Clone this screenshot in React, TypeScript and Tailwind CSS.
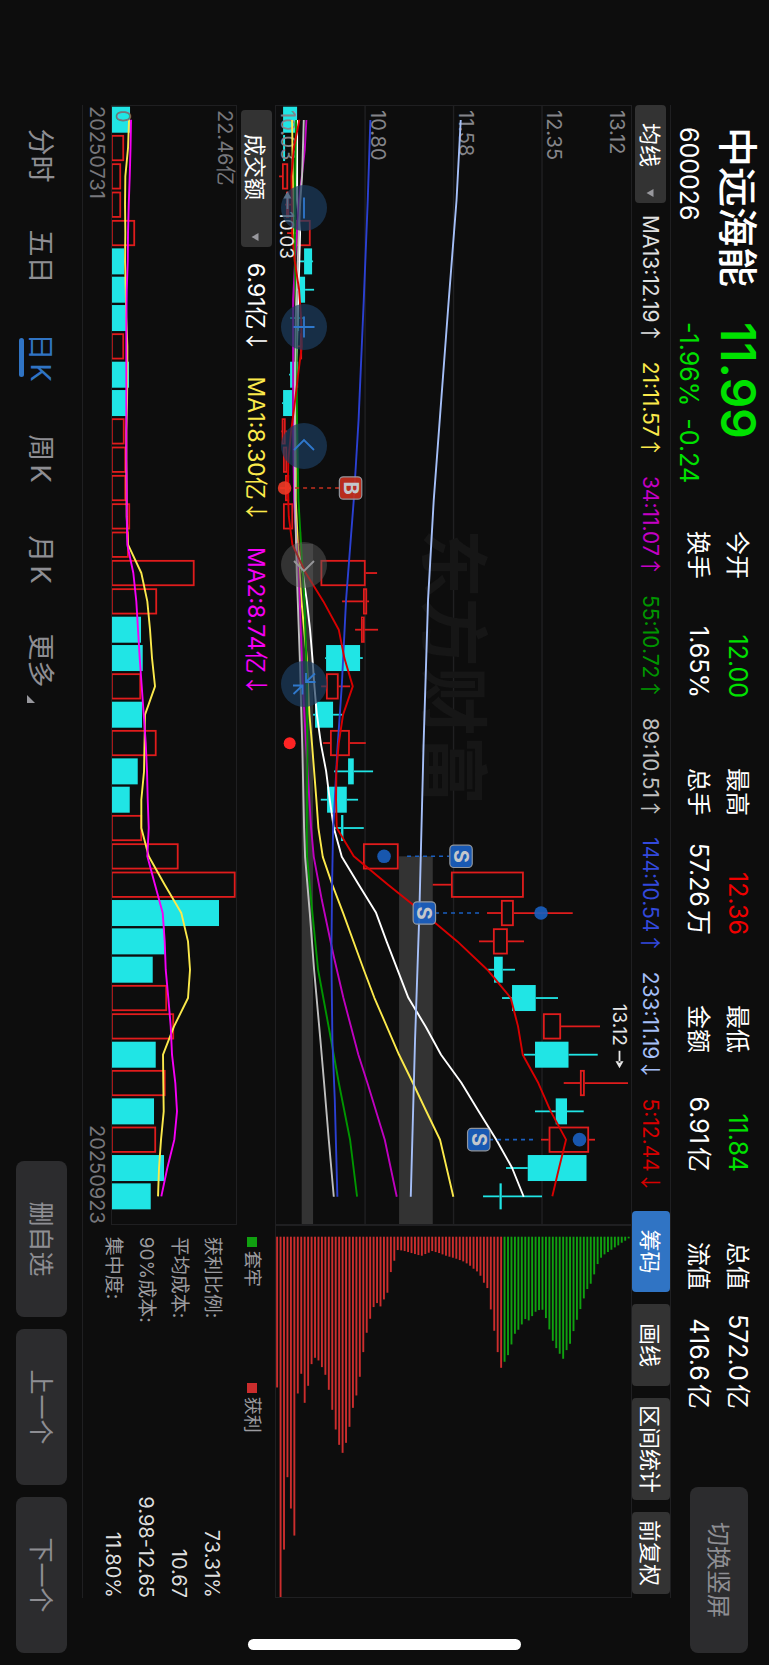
import React from "react";

type Candle = {
  up: boolean;
  body: [number, number];
  wick?: [number, number];
};

const STEP = 28.34;
const FIRST = 14.7;
const BODY = 26;
const centre = (i: number) => FIRST + i * STEP;

const PRICE_TOP = 632;
const AMOUNT_TOP = 238;

const UP = "#e01c1c";
const DOWN = "#20e5e5";

const up = (a: number, b: number, lo?: number, hi?: number): Candle => ({
  up: true,
  body: [a, b],
  wick: lo === undefined ? undefined : [lo, hi ?? b],
});
const down = (a: number, b: number, lo?: number, hi?: number): Candle => ({
  up: false,
  body: [a, b],
  wick: lo === undefined ? undefined : [lo, hi ?? b],
});

const candles: Candle[] = [
  down(283, 297), down(283, 285), up(282, 288, 279, 282), up(286, 289, 285, 291), up(296, 310.5, 287, 296),
  down(304, 312, 298, 313), down(299.5, 305, 297, 314), down(295, 299, 290, 303), up(300, 302, 297, 302), down(290, 298, 289, 298),
  down(283, 292, 282, 292), up(281.7, 285.5, 281, 287), up(283, 287, 283, 287), up(285, 289, 280, 290), up(283, 293),
  up(299.5, 301, 295, 301), up(320.5, 365.5, 365.5, 377), up(363, 367, 342, 369), up(361, 364.5, 355, 378), down(326, 360, 325, 362.7),
  up(326, 338.5, 321, 350), down(315, 333, 313, 342), up(330, 349.7, 323, 365.7), down(348, 353.7, 334, 373), down(327, 346.7, 320.7, 358),
  down(341, 343.3, 334, 363.7), up(363, 398.5), up(451, 523.7, 432.7, 451), up(501, 513.7, 487, 572.7), up(493, 507.7, 479, 524),
  down(494, 502.7, 488, 515), down(512, 535.7, 502, 558), up(543, 561, 561, 600), down(535, 568.5, 524, 597.7), up(580, 584.7, 563.7, 628),
  down(555.7, 567, 535, 583.7), up(548.7, 589, 541, 595), down(527.7, 586.5, 506, 527.7), down(499.5, 501.7, 483, 542),
];

const amounts = [
  131, 125, 122, 122, 136, 125, 127, 127, 125, 130, 127, 125.5, 127, 127, 131, 129.7, 195.5, 158, 142, 143.7,
  142, 143, 157.5, 138.7, 130.7, 143, 179.5, 236.5, 220, 165.5, 153.7, 168, 175, 156.7, 166.5, 155, 157, 165, 151.7,
];
const fallingAmounts = new Set([0, 5, 6, 7, 9, 10, 18, 19, 21, 23, 24, 28, 29, 30, 33, 35, 37, 38]);

const amountMa1 = [
  130, 129, 126.3, 126, 126.3, 126, 126.7, 127.3, 128.3, 128.3, 128, 127.3, 127.3, 127.5, 127.7, 129, 142.3, 148.3, 151, 153,
  156, 146, 145.5, 145, 142.3, 142.3, 149.7, 165.7, 182.3, 189, 191, 189, 175, 164, 164.3, 164.7, 162, 160, 159,
];
const amountMa2 = [
  132, 131.5, 130.7, 129.7, 129, 128.7, 127.7, 127.3, 127.3, 127.3, 127.3, 127.3, 127.3, 127.7, 127.7, 128.3, 134.3, 137.3, 139, 140.7,
  142.7, 144.7, 146.7, 148, 148.7, 149.7, 148.3, 156, 163.7, 165.7, 166.7, 169.3, 171.7, 173, 176.3, 178, 175.3, 168.3, 162.3,
];

const ma5 = [
  299.3, 293.7, 291.3, 291.7, 292, 294.7, 299, 301, 301.7, 298, 294.7, 291, 288.3, 287.7, 288.7, 292.3, 305.7, 323.3, 338.7, 344.3,
  352.7, 343, 338.7, 336.3, 336, 336.7, 353.7, 388, 423.3, 457.3, 487.3, 510.7, 518, 522.7, 538.3, 550.7, 566, 559, 552.3,
];

type Point = [number, number];

const ma233: Point[] = [[15, 460.7], [95, 456.5], [195, 448.7], [315, 439.7], [395, 433.7], [495, 428], [640, 423.5], [808, 419.3], [935, 415], [1092, 410.7]];
const ma144: Point[] = [[15, 370.3], [95, 367.7], [195, 363.7], [315, 358.5], [395, 353.7], [495, 346], [581, 341.7], [645, 337.3], [695, 334.7], [725, 333], [780, 332], [850, 331.3], [935, 332.3], [995, 334.7], [1092, 337.3]];
const ma55: Point[] = [[15, 296], [95, 294.7], [156, 294.7], [195, 296], [315, 297], [395, 298.3], [495, 304.3], [581, 307], [645, 307.3], [723, 306.7], [752, 307], [808, 312.3], [865, 318], [935, 331], [978, 338.7], [1035, 350], [1092, 357]];
const ma34: Point[] = [[15, 306.3], [45, 304.7], [95, 299], [156, 295], [195, 293], [315, 293], [395, 294], [495, 299.7], [581, 302.7], [640, 306], [695, 309.3], [723, 311], [752, 313.7], [795, 321.7], [850, 333.3], [893, 343.3], [950, 358.3], [978, 367.3], [1035, 384.7], [1092, 396.7]];
const ma21: Point[] = [[15, 292], [95, 293], [156, 295], [213, 296], [315, 295.7], [395, 295.7], [439, 297.7], [495, 301.3], [553, 306.7], [609, 309.3], [640, 312], [695, 316.3], [723, 318.3], [752, 322.7], [780, 332.3], [808, 343], [865, 363.7], [893, 374.3], [950, 399], [978, 412.7], [1006, 426], [1035, 440], [1092, 453.3]];
const ma13: Point[] = [[15, 297], [95, 297], [128, 300], [213, 297.7], [269, 296], [315, 294], [395, 294.7], [439, 296.7], [468, 302.7], [496, 306.7], [525, 310], [553, 312.3], [581, 314.3], [609, 316.7], [640, 321], [666, 326], [695, 329.7], [723, 333.7], [752, 341.7], [780, 358.7], [808, 376], [837, 386.7], [893, 408.3], [922, 425.7], [950, 441], [978, 461.3], [1006, 478.3], [1035, 496.3], [1063, 512], [1092, 523.7]];
const ma89: Point[] = [[15, 303.7], [71, 302], [99, 300], [156, 297.7], [213, 295.7], [315, 294.7], [395, 295], [468, 296.7], [553, 299.7], [645, 302.3], [723, 304], [752, 305], [808, 309.7], [865, 314], [935, 320.3], [978, 324], [1035, 328.7], [1092, 333.7]];

const chips = [
  472, 1103, 958, 741, 835, 916, 490, 431, 518, 467, 402, 383, 391, 411, 434, 479, 539, 598, 644, 668, 638, 590, 533, 496, 440, 366, 308,
  266, 231, 219, 229, 208, 188, 126, 92, 60, 61, 63, 66, 69, 72, 75, 77, 72, 68, 63, 66, 69, 73, 77, 80, 83, 86, 90, 94, 100, 107, 116,
  124, 137, 158, 174, 238, 302, 366, 413, 395, 375, 343, 311, 299, 283, 267, 271, 258, 245, 240, 239, 264, 298, 332, 354, 371, 386, 360,
  341, 303, 269, 237, 205, 177, 161, 133, 102, 83, 73, 66, 59, 52, 46, 38, 32, 25,
].map((v) => (v - 20) / 3);
const PROFIT_COUNT = 66;

const series = (values: number[], top: number) =>
  values.map((v, i) => `${centre(i).toFixed(1)},${(top - v).toFixed(1)}`).join(" ");
const path = (points: Point[]) => points.map(([x, v]) => `${x},${(PRICE_TOP - v).toFixed(1)}`).join(" ");

function Line({ points, color }: { points: string; color: string }) {
  return <polyline points={points} fill="none" stroke={color} strokeWidth="1.9" strokeLinejoin="round" />;
}

function Bar({ x, top, bottom, rising }: { x: number; top: number; bottom: number; rising: boolean }) {
  const height = Math.max(bottom - top, 1);
  if (!rising) return <rect x={x - BODY / 2} y={top} width={BODY} height={height} fill={DOWN} />;
  if (height < 2.5) return <rect x={x - BODY / 2} y={top} width={BODY} height={height} fill={UP} />;
  return (
    <rect x={x - BODY / 2 + 0.8} y={top + 0.8} width={BODY - 1.6} height={height - 1.6} fill="none" stroke={UP} strokeWidth="1.8" />
  );
}

function TradeMark({ x, badge, dot, from, to, label }: { x: number; badge: number; dot: number; from: number; to: number; label: "B" | "S" }) {
  const fill = label === "B" ? "#c5301f" : "#1a5fc0";
  return (
    <g>
      <line x1={x} x2={x} y1={PRICE_TOP - from} y2={PRICE_TOP - to} stroke={fill} strokeWidth="1.6" strokeDasharray="4 4" />
      <circle cx={x} cy={PRICE_TOP - dot} r="6.8" fill={label === "B" ? "#ee3a26" : fill} opacity="0.9" />
      <rect x={x - 11.2} y={PRICE_TOP - badge - 11.2} width="22.4" height="22.4" rx="4" fill={fill} stroke="#9aa0a8" strokeWidth="1.2" opacity="0.93" />
      <text x={x} y={PRICE_TOP - badge + 7} textAnchor="middle" fontSize="20" fontWeight="700" fill="#c3c7cc">
        {label}
      </text>
    </g>
  );
}

function PriceChart() {
  const grid = [90, 178.5, 267];
  return (
    <svg viewBox="0 0 1120 357" className="block w-full" role="img" aria-label="日K">
      {grid.map((y) => (
        <line key={y} x1="0" x2="1120" y1={y} y2={y} stroke="#202022" strokeWidth="1.4" />
      ))}
      <text x="424" y="204" fontSize="69" fontWeight="700" fill="#161616">东方财富</text>
      <rect x="439" y={PRICE_TOP - 313} width="681" height="11.4" fill="#333333" />
      <rect x="751.5" y={PRICE_TOP - 432.7} width="368.5" height="33.7" fill="#333333" />

      {candles.map((c, i) => {
        const x = centre(i);
        const [lo, hi] = c.body;
        const color = c.up ? UP : DOWN;
        return (
          <g key={i}>
            {c.wick && c.wick[0] < lo && (
              <line x1={x} x2={x} y1={PRICE_TOP - lo} y2={PRICE_TOP - c.wick[0]} stroke={color} strokeWidth="1.8" />
            )}
            {c.wick && c.wick[1] > hi && (
              <line x1={x} x2={x} y1={PRICE_TOP - c.wick[1]} y2={PRICE_TOP - hi} stroke={color} strokeWidth="1.8" />
            )}
            <Bar x={x} top={PRICE_TOP - hi} bottom={PRICE_TOP - lo} rising={c.up} />
          </g>
        );
      })}

      <g fontSize="20" fill="#85858a">
        <text x="5" y="22">13.12</text>
        <text x="5" y="85">12.35</text>
        <text x="5" y="173">11.58</text>
        <text x="5" y="261">10.80</text>
        <text x="5" y="351">10.03</text>
      </g>

      <Line points={path(ma13)} color="#ffffff" />
      <Line points={path(ma21)} color="#fbe94b" />
      <Line points={path(ma34)} color="#bf00bf" />
      <Line points={path(ma55)} color="#009600" />
      <Line points={path(ma89)} color="#bfbfbf" />
      <Line points={path(ma144)} color="#2b40d2" />
      <Line points={path(ma233)} color="#a5bff8" />
      <Line points={series(ma5, PRICE_TOP)} color="#d80000" />

      <g fontSize="19" fill="#e6e6e6" stroke="none">
        <text x="106" y="352">10.03</text>
        <path d="M86.500 344.600l7-4v8zM92 343.700h12v1.800H92z" />
        <text x="899" y="19">13.12</text>
        <path d="M963.500 12.500l-7-4v8zM946 11.600h12v1.800h-12z" />
      </g>

      <circle cx="638.3" cy={PRICE_TOP - 289.6} r="6" fill="#ff2424" />
      <TradeMark label="B" x={383.1} badge={350.5} dot={284.5} from={295} to={339} />
      <TradeMark label="S" x={751.5} badge={461} dot={384} from={407} to={449} />
      <TradeMark label="S" x={808.2} badge={424.3} dot={541} from={479} to={436} />
      <TradeMark label="S" x={1034.9} badge={478.7} dot={579.5} from={533} to={490} />
    </svg>
  );
}

function AmountChart() {
  return (
    <svg viewBox="0 0 1120 126" className="block w-full" role="img" aria-label="成交额">
      {amounts.map((v, i) => (
        <Bar key={i} x={centre(i)} top={AMOUNT_TOP - v} bottom={126} rising={!fallingAmounts.has(i)} />
      ))}
      <Line points={series(amountMa1, AMOUNT_TOP)} color="#fbe94b" />
      <Line points={series(amountMa2, AMOUNT_TOP)} color="#f500f5" />
      <g fontSize="20" fill="#77777c">
        <text x="5" y="19">22.46亿</text>
        <text x="5" y="121">0</text>
      </g>
    </svg>
  );
}

function ChipChart() {
  return (
    <svg viewBox="0 0 373 357" className="block w-full" role="img" aria-label="筹码">
      {chips.map((len, k) => (
        <rect key={k} x="11.7" y={353.7 - k * 3.444} width={len} height="1.9" fill={k < PROFIT_COUNT ? "#cb2d2d" : "#10a010"} />
      ))}
    </svg>
  );
}

const tools = [
  { label: "缩小", muted: false, d: "M12.5 23h21" },
  { label: "放大", muted: false, d: "M12.5 23h21M23 12.5v21" },
  { label: "向左", muted: false, d: "M27 13l-10 10 10 10" },
  { label: "向右", muted: true, d: "M19 13l10 10-10 10" },
  { label: "收起", muted: false, d: "M21 11.500v9.500h-9M21 21l-8.500-9M24.500 34v-9.500h9M24.500 24.500l8.500 9" },
];

const averages = [
  { text: "MA13:12.19", trend: "↑", tone: "text-[#e0e0e0]" },
  { text: "21:11.57", trend: "↑", tone: "text-[#fbe94b]" },
  { text: "34:11.07", trend: "↑", tone: "text-[#c400c4]" },
  { text: "55:10.72", trend: "↑", tone: "text-[#009600]" },
  { text: "89:10.51", trend: "↑", tone: "text-[#bfbfbf]" },
  { text: "144:10.54", trend: "↑", tone: "text-[#3349dc]" },
  { text: "233:11.19", trend: "↓", tone: "text-[#a5bff8]" },
  { text: "5:12.44", trend: "↓", tone: "text-[#d80000]" },
];

const turnover = [
  { text: "6.91亿", trend: "↓", tone: "text-white" },
  { text: "MA1:8.30亿", trend: "↓", tone: "text-[#fbe94b]" },
  { text: "MA2:8.74亿", trend: "↓", tone: "text-[#f500f5]" },
];

const quotes = [
  [{ name: "今开", value: "12.00", tone: "text-[#00e100]" }, { name: "换手", value: "1.65%", tone: "text-white" }],
  [{ name: "最高", value: "12.36", tone: "text-[#f00000]" }, { name: "总手", value: "57.26万", tone: "text-white" }],
  [{ name: "最低", value: "11.84", tone: "text-[#00e100]" }, { name: "金额", value: "6.91亿", tone: "text-white" }],
  [{ name: "总值", value: "572.0亿", tone: "text-white" }, { name: "流值", value: "416.6亿", tone: "text-white" }],
];

const costs = [
  ["获利比例:", "73.31%"],
  ["平均成本:", "10.67"],
  ["90%成本:", "9.98-12.65"],
  ["集中度:", "11.80%"],
];

const periods = ["分时", "五日", "日K", "周K", "月K", "更多"];

function Caret() {
  return (
    <svg viewBox="0 0 8 8" className="size-2" aria-hidden="true">
      <path d="M0 .5h8L4 7.5z" fill="#98989d" />
    </svg>
  );
}

function Reading({ text, trend, tone }: { text: string; trend: string; tone: string }) {
  return (
    <span className={tone}>
      {text}
      <span className="font-['Noto_Sans_CJK_SC']">{trend}</span>
    </span>
  );
}

export default function App() {
  return (
    <div className="h-screen w-screen overflow-hidden bg-[#0d0d0d]">
      <div className="relative flex h-[100vw] w-[100vh] origin-top-left translate-x-[100vw] rotate-90 flex-col whitespace-nowrap bg-[#0d0d0d] font-['Inter','Noto_Sans_CJK_SC',sans-serif] text-white">
        <header className="flex h-[98px] shrink-0 pr-3 pl-[127px]">
          <div className="w-[195px]">
            <h1 className="flex h-16 items-center text-[40px] leading-none font-medium">中远海能</h1>
            <p className="flex h-8 items-center text-[25px] leading-none">600026</p>
          </div>
          <div className="w-[209px] text-[#00e100]">
            <p className="flex h-[62px] items-center text-[48px] leading-none font-semibold">11.99</p>
            <p className="flex h-9 items-center gap-3 text-[25px] leading-none">
              <span>-1.96%</span>
              <span>-0.24</span>
            </p>
          </div>
          <div className="flex gap-[70px] pt-3">
            {quotes.map((column) => (
              <dl key={column[0].name} className="w-[167px]">
                {column.map((q) => (
                  <div key={q.name} className="flex h-[39px] items-center justify-between text-[24px] leading-none">
                    <dt>{q.name}</dt>
                    <dd className={`text-[25px] [text-autospace:normal] ${q.tone}`}>{q.value}</dd>
                  </div>
                ))}
              </dl>
            ))}
          </div>
          <button type="button" className="mt-[21px] ml-auto h-[58px] w-[166px] rounded-lg bg-[#2c2c2e] pt-0.5 text-[24px] leading-none text-[#8e8e93]">
            切换竖屏
          </button>
        </header>

        <main className="mr-[67px] ml-[105px] border-b border-[#1f1f21]">
          <div className="flex h-[39px] items-center border-t border-[#1f1f21]">
            <button type="button" className="flex h-[31px] w-[98px] shrink-0 items-center justify-between rounded bg-[#333333] pt-0.5 pr-1.5 pl-[18px] text-[22px] leading-none">
              均线
              <Caret />
            </button>
            <div className="flex flex-1 justify-between pr-[18px] pl-3 text-[21px] leading-none">
              {averages.map((a) => (
                <Reading key={a.text} {...a} />
              ))}
            </div>
            <div className="flex shrink-0 gap-3 pr-1 text-[22px] leading-none">
              <button type="button" className="h-[38px] w-[81px] rounded bg-[#3074c4] pt-0.5">筹码</button>
              <button type="button" className="h-[38px] w-[82px] rounded bg-[#333333] pt-0.5">画线</button>
              <button type="button" className="h-[38px] w-[102px] rounded bg-[#333333] pt-0.5">区间统计</button>
              <button type="button" className="h-[38px] w-[82px] rounded bg-[#333333] pt-0.5">前复权</button>
            </div>
          </div>

          <div className="grid grid-cols-[3fr_1fr]">
            <div>
              <div className="relative outline -outline-offset-1 outline-[#1f1f21]">
                <PriceChart />
                <div className="absolute bottom-[6px] left-[80px] flex gap-[73px]">
                  {tools.map((t) => (
                    <button
                      key={t.label}
                      type="button"
                      aria-label={t.label}
                      className={t.muted ? "size-[46px] rounded-full bg-[#5a5a5a]/50" : "size-[46px] rounded-full bg-[#1c3d5f]/70"}
                    >
                      <svg viewBox="0 0 46 46" className="size-full" fill="none" strokeWidth="1.8" stroke={t.muted ? "#97979a" : "#2f78cc"} aria-hidden="true">
                        <path d={t.d} />
                      </svg>
                    </button>
                  ))}
                </div>
              </div>
              <div className="flex h-[38px] items-center text-[22px] leading-none">
                <button type="button" className="mr-4 ml-[5px] flex h-[31px] w-[137px] items-center justify-between rounded bg-[#333333] pt-0.5 pr-1.5 pl-6 text-[22px] leading-none">
                  成交额
                  <Caret />
                </button>
                <div className="flex gap-6 text-[23px] leading-none">
                  {turnover.map((t) => (
                    <Reading key={t.text} {...t} />
                  ))}
                </div>
              </div>
              <div className="outline -outline-offset-1 outline-[#1f1f21]">
                <AmountChart />
              </div>
              <div className="flex h-[28px] items-center justify-between px-[1px] text-[20px] leading-none text-[#77777c]">
                <span>20250731</span>
                <span>20250923</span>
              </div>
            </div>

            <aside>
              <div className="outline -outline-offset-1 outline-[#1f1f21]">
                <ChipChart />
              </div>
              <div className="flex h-[46px] items-center gap-24 pl-3 text-[18px] leading-none text-[#9b9b9f]">
                <span className="flex items-center gap-1">
                  <i className="size-[10px] bg-[#10a010]" />
                  套牢
                </span>
                <span className="flex items-center gap-1">
                  <i className="size-[10px] bg-[#cb2d2d]" />
                  获利
                </span>
              </div>
              <dl className="pl-3 text-[19px] leading-none">
                {costs.map(([name, value]) => (
                  <div key={name} className="flex h-[33px] items-center justify-between">
                    <dt className="[text-autospace:normal] text-[#9b9b9f]">{name}</dt>
                    <dd className="text-[20px] text-[#dedede]">{value}</dd>
                  </div>
                ))}
              </dl>
            </aside>
          </div>
        </main>

        <footer className="flex flex-1 items-center justify-between pr-3 pl-[105px]">
          <nav className="flex pt-0.5 text-[27px] leading-none text-[#8e8e93]">
            {periods.map((p) => (
              <a
                key={p}
                href="#"
                aria-current={p === "日K" ? "page" : undefined}
                className={p === "日K" ? "relative flex w-[101px] justify-center text-[#3074c4]" : "relative flex w-[101px] justify-center"}
              >
                <span className="[text-autospace:normal]">{p}</span>
                {p === "日K" && <i className="absolute -bottom-2 h-[5px] w-[39px] rounded-full bg-[#3074c4]" />}
                {p === "更多" && (
                  <svg viewBox="0 0 8 8" className="absolute right-2 bottom-0 size-2" aria-hidden="true">
                    <path d="M8 0v8H0z" fill="#98989d" />
                  </svg>
                )}
              </a>
            ))}
          </nav>
          <div className="flex gap-3 text-[25px] leading-none text-[#8e8e93]">
            <button type="button" className="h-[51px] w-[156px] rounded-lg bg-[#2c2c2e] pt-0.5">删自选</button>
            <button type="button" className="h-[51px] w-[156px] rounded-lg bg-[#2c2c2e] pt-0.5">上一个</button>
            <button type="button" className="h-[51px] w-[156px] rounded-lg bg-[#2c2c2e] pt-0.5">下一个</button>
          </div>
        </footer>

        <div className="absolute top-[248px] right-[15px] h-[273px] w-[11px] rounded-full bg-white" />
      </div>
    </div>
  );
}
